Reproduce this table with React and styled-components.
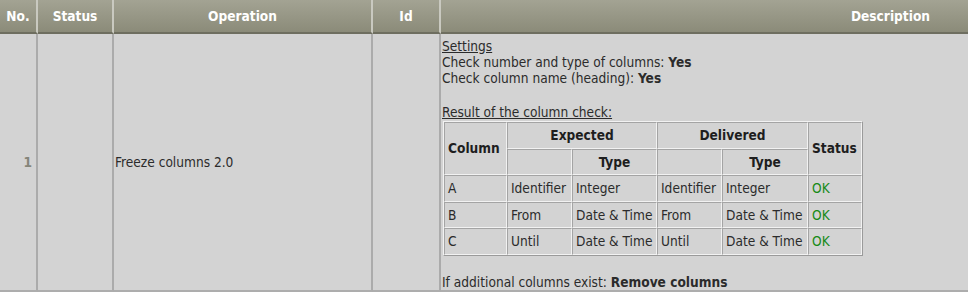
import React from "react";
import styled, { createGlobalStyle } from "styled-components";

const Global = createGlobalStyle`
  html, body { margin: 0; padding: 0; background: #ffffff; overflow: hidden; }
  body {
    font-family: "DejaVu Sans Condensed", "DejaVu Sans", "Liberation Sans", sans-serif;
    font-size: 13.6px;
    color: #2b2b2b;
  }
`;

const Grid = styled.table`
  width: 968px;
  border-collapse: separate;
  border-spacing: 0;
  table-layout: fixed;
`;

const HeadCell = styled.th`
  box-sizing: border-box;
  width: ${(p) => (p.$w ? `${p.$w}px` : "auto")};
  height: 34px;
  padding: 0 ${(p) => (p.$right ? "38px" : "2px")} 0 2px;
  text-align: ${(p) => (p.$right ? "right" : "center")};
  color: #ffffff;
  font-weight: bold;
  font-size: 13.6px;
  background: linear-gradient(#a3a393, #8b8b79);
  border-right: 2px solid #c9c9c0;
  border-bottom: 2px solid #6e6e60;
  &:last-child { border-right: none; }
`;

const Td = styled.td`
  box-sizing: border-box;
  height: 256px;
  background: #d3d3d3;
  padding: ${(p) => p.$pad || "0 2px"};
  vertical-align: ${(p) => (p.$top ? "top" : "middle")};
  text-align: ${(p) => (p.$right ? "right" : "left")};
  border-right: 2px solid #ababab;
  border-bottom: 2px solid #adadad;
  line-height: 16px;
  &:last-child { border-right: none; }
`;

const Num = styled.span`
  color: #85857a;
  font-weight: bold;
`;

const Heading = styled.div`
  text-decoration: underline;
`;

const Line = styled.div`
  min-height: ${(p) => (p.$gap ? "18px" : "16px")};
`;

const Strong = styled.b`
  font-weight: bold;
  color: #2b2b2b;
`;

const Check = styled.table`
  width: 420px;
  table-layout: fixed;
  border-collapse: separate;
  border-spacing: 0;
  border: 1px solid;
  border-color: #f2f2f2 #9a9a9a #9a9a9a #f2f2f2;
  margin: 1px 0 0 1px;
`;

const Cell = styled.td`
  box-sizing: border-box;
  width: ${(p) => (p.$w ? `${p.$w}px` : "auto")};
  padding: 4px 3px;
  line-height: 16.5px;
  border: 1px solid;
  border-color: #a4a4a4 #f2f2f2 #f2f2f2 #a4a4a4;
  text-align: ${(p) => (p.$center ? "center" : "left")};
  font-weight: ${(p) => (p.$bold ? "bold" : "normal")};
  color: ${(p) => (p.$ok ? "#178a17" : p.$bold ? "#1e1e1e" : "#2b2b2b")};
  white-space: nowrap;
`;

const rows = [
  ["A", "Identifier", "Integer", "Identifier", "Integer", "OK"],
  ["B", "From", "Date & Time", "From", "Date & Time", "OK"],
  ["C", "Until", "Date & Time", "Until", "Date & Time", "OK"],
];

function ColumnCheck() {
  return (
    <Check>
      <colgroup>
        <col style={{ width: 63 }} />
        <col style={{ width: 65 }} />
        <col style={{ width: 85 }} />
        <col style={{ width: 65 }} />
        <col style={{ width: 86 }} />
        <col style={{ width: 54 }} />
      </colgroup>
      <tbody>
        <tr>
          <Cell $bold rowSpan={2}>Column</Cell>
          <Cell $bold $center colSpan={2}>Expected</Cell>
          <Cell $bold $center colSpan={2}>Delivered</Cell>
          <Cell $bold rowSpan={2}>Status</Cell>
        </tr>
        <tr>
          <Cell />
          <Cell $bold $center>Type</Cell>
          <Cell />
          <Cell $bold $center>Type</Cell>
        </tr>
        {rows.map(([c, e1, e2, d1, d2, s]) => (
          <tr key={c}>
            <Cell>{c}</Cell>
            <Cell>{e1}</Cell>
            <Cell>{e2}</Cell>
            <Cell>{d1}</Cell>
            <Cell>{d2}</Cell>
            <Cell $ok>{s}</Cell>
          </tr>
        ))}
      </tbody>
    </Check>
  );
}

export default function App() {
  return (
    <>
      <Global />
      <Grid>
        <thead>
          <tr>
            <HeadCell $w={38}>No.</HeadCell>
            <HeadCell $w={76}>Status</HeadCell>
            <HeadCell $w={259}>Operation</HeadCell>
            <HeadCell $w={68}>Id</HeadCell>
            <HeadCell $right>Description</HeadCell>
          </tr>
        </thead>
        <tbody>
          <tr>
            <Td $right $pad="0 4px 0 0"><Num>1</Num></Td>
            <Td />
            <Td $pad="0 1px">Freeze columns 2.0</Td>
            <Td />
            <Td $top $pad="4px 1px 0 1px">
              <Heading>Settings</Heading>
              <Line>Check number and type of columns: <Strong>Yes</Strong></Line>
              <Line>Check column name (heading): <Strong>Yes</Strong></Line>
              <Line $gap />
              <Heading>Result of the column check:</Heading>
              <ColumnCheck />
              <Line $gap />
              <Line>If additional columns exist: <Strong>Remove columns</Strong></Line>
            </Td>
          </tr>
        </tbody>
      </Grid>
    </>
  );
}
